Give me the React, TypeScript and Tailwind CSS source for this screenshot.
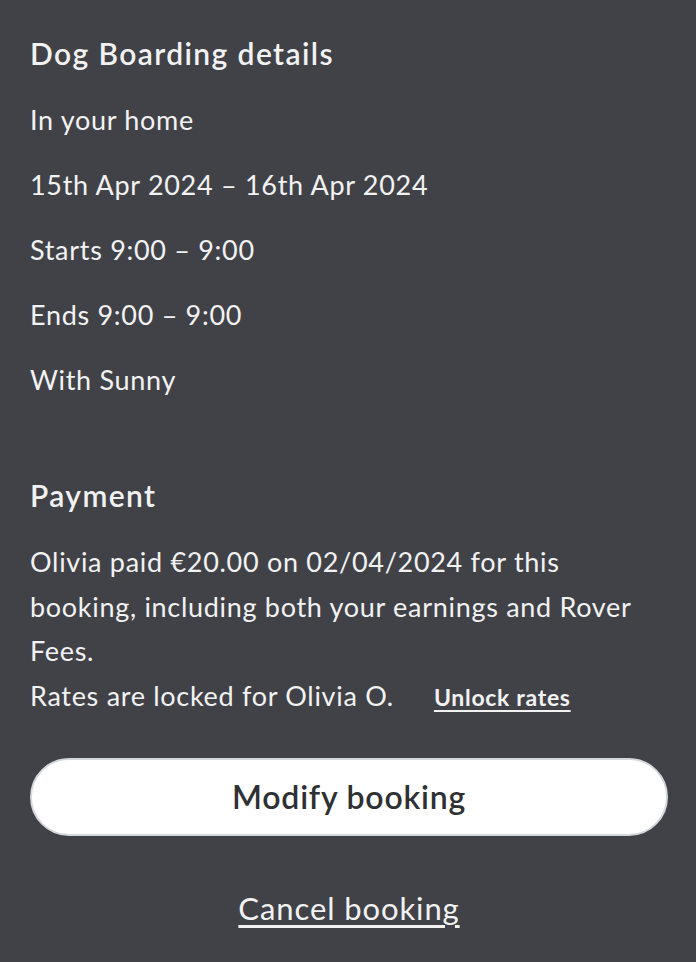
export default function App() {
  const details = [
    "In your home",
    "15th Apr 2024 – 16th Apr 2024",
    "Starts 9:00 – 9:00",
    "Ends 9:00 – 9:00",
    "With Sunny",
  ];

  return (
    <main
      className="min-h-screen bg-[#414247] pl-[30px] pr-[28px] pt-[35px] pb-10 text-[#f2f2f3]"
      style={{ fontFamily: "Lato, 'Open Sans', sans-serif" }}
    >
      <h2 className="text-[30px] font-semibold leading-[36px] tracking-[1.4px]">Dog Boarding details</h2>

      <div className="mt-[31px] flex flex-col gap-[29px]">
        {details.map((line, i) => (
          <p key={i} className="text-[27px] leading-[36px] tracking-[0.7px]">
            {line}
          </p>
        ))}
      </div>

      <h2 className="mt-[79px] text-[30px] font-semibold leading-[36px] tracking-[1.4px]">Payment</h2>

      <div className="mt-[27px] text-[27px] leading-[44.5px] tracking-[0.7px]">
        <p>
          Olivia paid €20.00 on 02/04/2024 for this
          <br />
          booking, including both your earnings and Rover
          <br />
          Fees.
        </p>
        <p className="flex items-baseline">
          <span>Rates are locked for Olivia O.</span>
          <a href="#" className="ml-10 text-[23px] font-bold tracking-[0.7px] underline underline-offset-4">
            Unlock rates
          </a>
        </p>
      </div>

      <button className="mt-[39px] flex h-[78px] w-full items-center justify-center rounded-full border-2 border-[#d3d8dd] bg-white text-[32px] font-semibold tracking-[0.8px] text-[#2f3033]">
        Modify booking
      </button>

      <div className="mt-[52px] flex justify-center">
        <a href="#" className="text-[31px] leading-[40px] tracking-[0.9px] underline underline-offset-[5px]">
          Cancel booking
        </a>
      </div>
    </main>
  );
}
